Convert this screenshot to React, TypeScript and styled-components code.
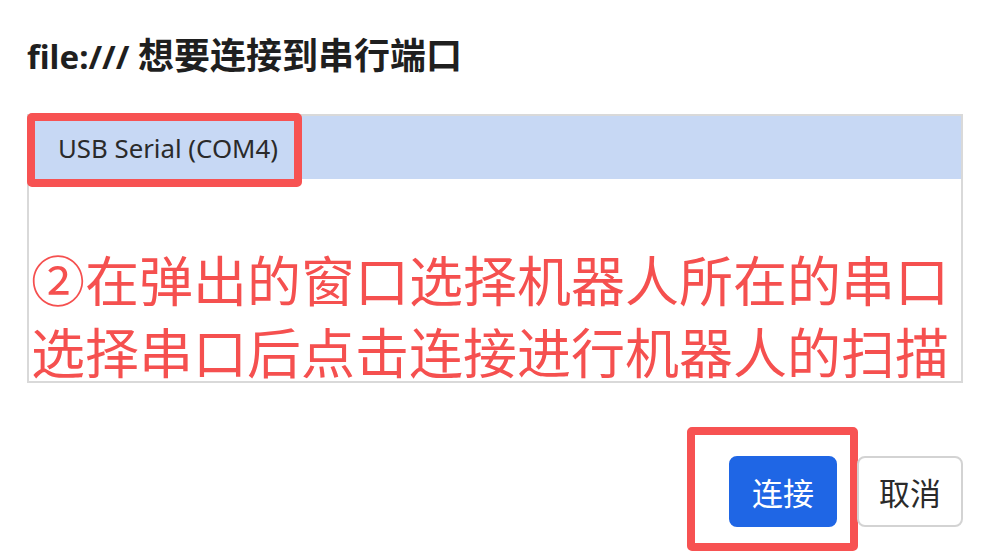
import { createGlobalStyle, styled } from "styled-components";

const GlobalStyle = createGlobalStyle`
  html, body {
    margin: 0;
    padding: 0;
    background: #ffffff;
  }
  body {
    font-family: "Noto Sans", "Noto Sans CJK SC", sans-serif;
  }
`;

const App = () => {
  return (
    <>
      <GlobalStyle />
      <Page>
        <Title>
          file:/// <Cjk>想要连接到串行端口</Cjk>
        </Title>
        <ListBox>
          <Option selected>
            <span>USB Serial (COM4)</span>
            <Mark />
          </Option>
          <Note>
            ②在弹出的窗口选择机器人所在的串口
            <br />
            选择串口后点击连接进行机器人的扫描
          </Note>
        </ListBox>
        <Actions>
          <Button primary>
            连接
            <ButtonMark />
          </Button>
          <Button>取消</Button>
        </Actions>
      </Page>
    </>
  );
};

export default App;

const Page = styled.div`
  width: 981px;
  height: 552px;
  box-sizing: border-box;
  padding: 36px 18px 0 27px;
  overflow: hidden;
`;

const Title = styled.h1`
  margin: 0;
  height: 42px;
  font-family: "Noto Sans", "Noto Sans CJK SC", sans-serif;
  font-size: 33px;
  line-height: 42px;
  font-weight: 700;
  color: #1f1f1f;
`;

const Cjk = styled.span`
  font-size: 36px;
  line-height: 1;
`;

const ListBox = styled.div`
  position: relative;
  margin-top: 36px;
  height: 269px;
  box-sizing: border-box;
  border: 2px solid #d9d9d9;
`;

const Option = styled.div<{ selected?: boolean }>`
  position: relative;
  height: 63px;
  display: flex;
  align-items: center;
  padding-left: 29px;
  background: ${(p) => (p.selected ? "#c7d8f4" : "transparent")};
  font-family: "Noto Sans", sans-serif;
  font-size: 25.8px;
  color: #2a2a2a;
`;

const Mark = styled.div`
  position: absolute;
  left: -2px;
  top: -3px;
  width: 275px;
  height: 74px;
  box-sizing: border-box;
  border: 8px solid #f75252;
  border-radius: 5px;
`;

const Note = styled.div`
  margin-top: 64px;
  padding-left: 2px;
  font-family: "Noto Sans CJK SC", sans-serif;
  font-size: 54px;
  line-height: 72px;
  color: #f5504f;
  white-space: nowrap;
`;

const Actions = styled.div`
  display: flex;
  justify-content: flex-end;
  gap: 20px;
  margin-top: 73px;
`;

const Button = styled.div<{ primary?: boolean }>`
  position: relative;
  width: ${(p) => (p.primary ? "108px" : "106px")};
  height: 71px;
  box-sizing: border-box;
  display: flex;
  align-items: center;
  justify-content: center;
  border-radius: 8px;
  border: 2px solid ${(p) => (p.primary ? "#1f66e5" : "#d3d3d3")};
  background: ${(p) => (p.primary ? "#1f66e5" : "#ffffff")};
  color: ${(p) => (p.primary ? "#ffffff" : "#2a2a2a")};
  font-family: "Noto Sans CJK SC", sans-serif;
  font-size: 31px;
`;

const ButtonMark = styled.div`
  position: absolute;
  left: -44px;
  top: -31px;
  width: 171px;
  height: 124px;
  box-sizing: border-box;
  border: 8px solid #f75252;
  border-radius: 5px;
`;
